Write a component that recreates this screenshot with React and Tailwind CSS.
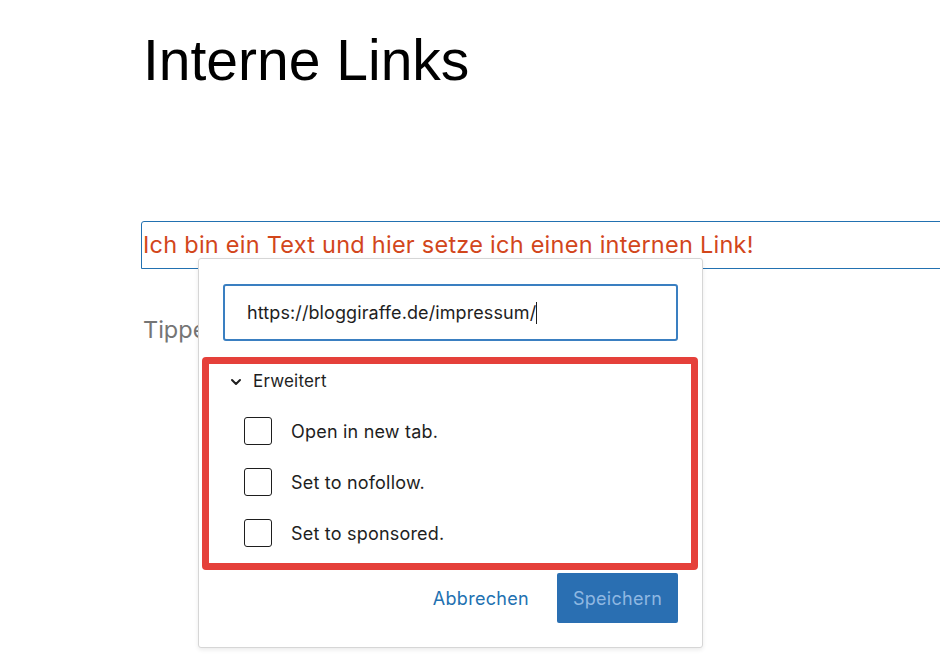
import React from "react";

function Check({ label }) {
  return (
    <div className="flex items-center h-[28px]">
      <div className="w-[28px] h-[28px] border-[1.5px] border-[#1e1e1e] rounded-[3px] bg-white shrink-0" />
      <span className="ml-[19px] text-[18px] text-[#1e1e1e] tracking-[0.2px]">{label}</span>
    </div>
  );
}

export default function App() {
  return (
    <div className="relative w-[940px] h-[658px] bg-white overflow-hidden" style={{ fontFamily: "Inter, 'Liberation Sans', sans-serif" }}>
      <div className="pl-[141px] pt-[26px]">
        <h1 className="pl-[2px] text-[57px] leading-[68px] text-black font-normal" style={{ fontFamily: "'Liberation Sans', Arial, sans-serif" }}>
          Interne Links
        </h1>
        <div className="mt-[127px] w-[820px] h-[48px] border border-[#2271b1] rounded-tl-[3px] flex items-center pl-[1px]">
          <span className="text-[23.5px] text-[#d2461b] whitespace-nowrap tracking-[0.25px]">
            Ich bin ein Text und hier setze ich einen internen Link!
          </span>
        </div>
        <div className="mt-[43px] pl-[2px] text-[23.5px] text-[#757575] whitespace-nowrap">
          Tippe
        </div>
      </div>

      <div className="absolute left-[198px] top-[258px] w-[505px] h-[390px] bg-white border border-[#d6d6d6] rounded-[3px] shadow-[0_2px_4px_rgba(0,0,0,0.08)]">
        <div className="mx-[24px] mt-[25px] h-[57px] border-[2px] border-[#3a7fc1] rounded-[3px] flex items-center pl-[22px]">
          <span className="text-[18px] text-[#1e1e1e] tracking-[0.1px]">https://bloggiraffe.de/impressum/</span>
          <span className="w-[1px] h-[22px] bg-[#1e1e1e]" />
        </div>

        <div className="mt-[16px] ml-[3px] w-[496px] h-[213px] border-[7px] border-[#e5403a] rounded-[4px]">
          <div className="flex items-center h-[20px] mt-[8px] ml-[19px]">
            <svg width="16" height="16" viewBox="0 0 24 24" className="shrink-0">
              <path d="M6 9l6 6 6-6" fill="none" stroke="#1e1e1e" strokeWidth="3" strokeLinecap="round" strokeLinejoin="round" />
            </svg>
            <span className="ml-[9px] text-[17px] text-[#1e1e1e] tracking-[0.2px]">Erweitert</span>
          </div>
          <div className="ml-[35px] mt-[25px] flex flex-col gap-[23px]">
            <Check label="Open in new tab." />
            <Check label="Set to nofollow." />
            <Check label="Set to sponsored." />
          </div>
        </div>

        <div className="flex justify-end items-center mt-[3px] mr-[24px] gap-[28px]">
          <span className="text-[18px] text-[#2271b1] tracking-[0.3px]">Abbrechen</span>
          <div className="w-[121px] h-[50px] bg-[#2a6fb2] rounded-[2px] flex items-center justify-center">
            <span className="text-[18px] text-[#8fb8e2] tracking-[0.3px]">Speichern</span>
          </div>
        </div>
      </div>
    </div>
  );
}
